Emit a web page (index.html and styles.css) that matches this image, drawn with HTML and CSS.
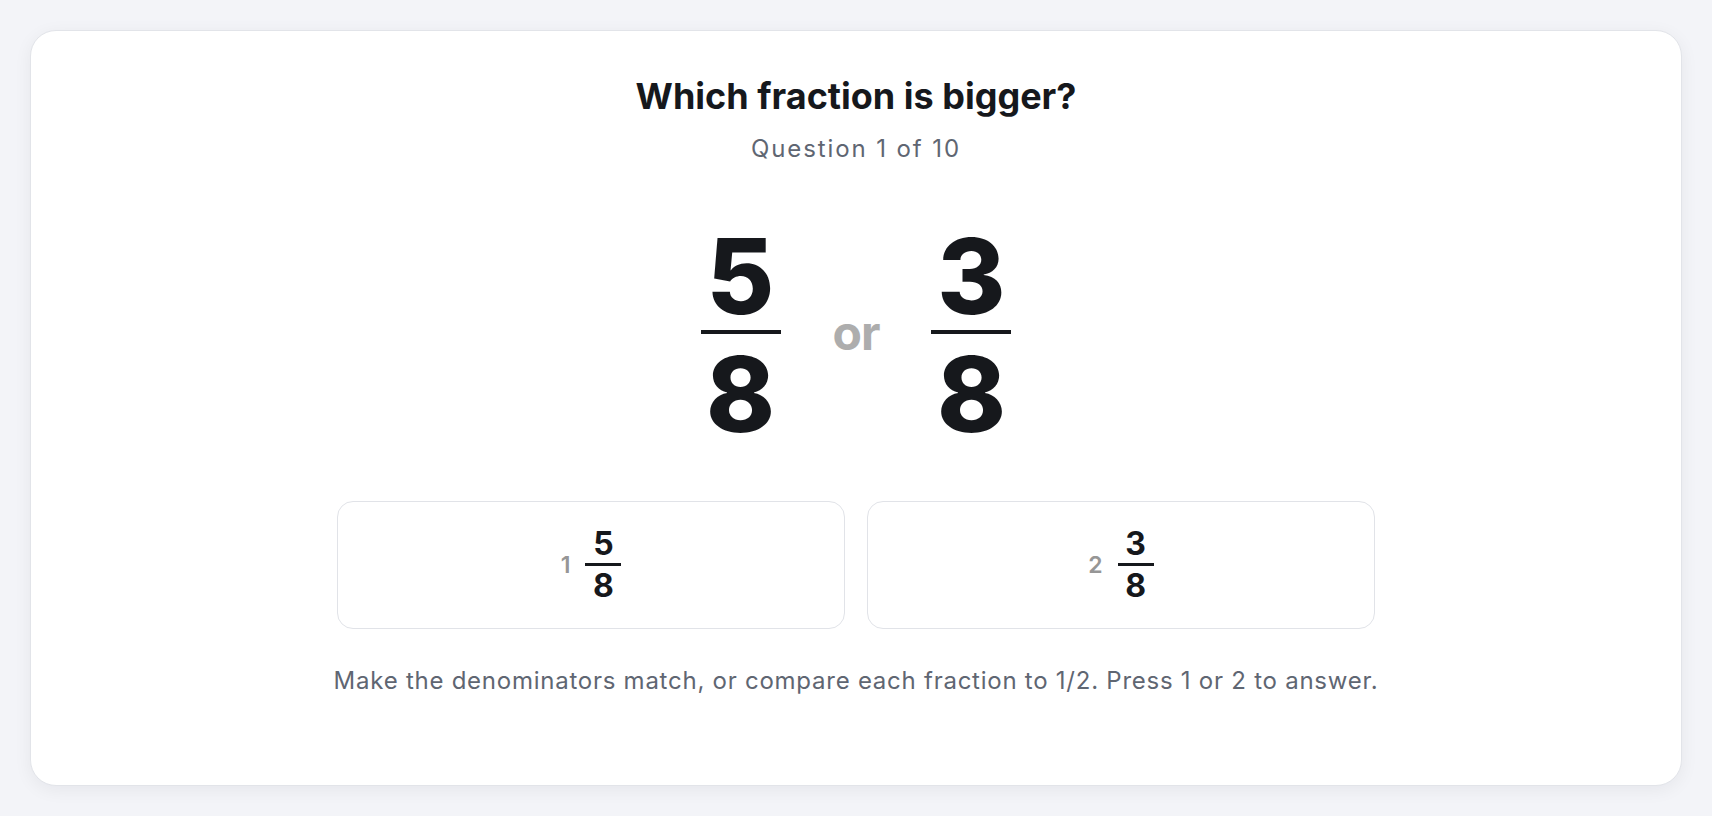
FILE: index.html
```html
<!DOCTYPE html>
<html lang="en">
<head>
  <meta charset="UTF-8" />
  <meta name="viewport" content="width=device-width, initial-scale=1.0"/>
  <title>Which fraction is bigger?</title>
  <link rel="stylesheet" href="styles.css">
</head>
<body>

<main class="card">
  <h1 class="title">Which fraction is bigger?</h1>
  <p class="progress">Question 1 of 10</p>

  <div class="compare">
    <div class="frac frac-big">
      <span class="num">5</span>
      <span class="bar"></span>
      <span class="den">8</span>
    </div>
    <span class="or">or</span>
    <div class="frac frac-big">
      <span class="num">3</span>
      <span class="bar"></span>
      <span class="den">8</span>
    </div>
  </div>

  <div class="choices">
    <button class="choice">
      <span class="key">1</span>
      <span class="frac frac-small">
        <span class="num">5</span>
        <span class="bar"></span>
        <span class="den">8</span>
      </span>
    </button>
    <button class="choice">
      <span class="key">2</span>
      <span class="frac frac-small">
        <span class="num">3</span>
        <span class="bar"></span>
        <span class="den">8</span>
      </span>
    </button>
  </div>

  <p class="hint">Make the denominators match, or compare each fraction to 1/2. Press 1 or 2 to answer.</p>
</main>

</body>
</html>
```

FILE: styles.css
```css
* {
  margin: 0;
  padding: 0;
  box-sizing: border-box;
}

html, body {
  height: 100%;
  font-family: Inter, 'Noto Sans', sans-serif;
  background: #f3f4f8;
  color: #16181c;
}

body {
  padding: 30px;
}

.card {
  height: 100%;
  background: #fff;
  border: 1px solid #e2e4e9;
  border-radius: 26px;
  box-shadow: 0 4px 18px rgba(20, 24, 40, 0.06);
  padding-top: 43px;
  display: flex;
  flex-direction: column;
  align-items: center;
}

.title {
  font-size: 36px;
  line-height: 44px;
  font-weight: 700;
}

.progress {
  margin-top: 15px;
  font-size: 24px;
  line-height: 32px;
  letter-spacing: 1.9px;
  color: #5f6672;
}

/* Fracciones */
.frac {
  display: inline-flex;
  flex-direction: column;
  align-items: stretch;
  text-align: center;
  line-height: 1;
}

.frac .bar {
  display: block;
  background: #16181c;
}

.compare {
  margin-top: 59px;
  display: flex;
  align-items: center;
  gap: 52px;
}

.frac-big {
  font-size: 104px;
  font-weight: 800;
  width: 80px;
}

.frac-big .bar {
  height: 4px;
  margin: 2px 0 8px;
}

.or {
  font-size: 48px;
  line-height: 1;
  font-weight: 700;
  color: #adadad;
  margin-bottom: 5px;
  letter-spacing: -1px;
}

.choices {
  margin-top: 55px;
  display: flex;
  gap: 22px;
}

.choice {
  width: 508px;
  height: 128px;
  background: #fff;
  border: 1px solid #e1e3e8;
  border-radius: 16px;
  display: flex;
  justify-content: center;
  align-items: center;
  gap: 15px;
  font-family: inherit;
  color: inherit;
  cursor: pointer;
}

.key {
  font-size: 23px;
  font-weight: 600;
  color: #969696;
}

.frac-small {
  font-size: 32px;
  font-weight: 700;
  width: 36px;
}

.frac-small .bar {
  height: 3px;
  margin: 3px 0 4px;
}

.hint {
  margin-top: 36px;
  font-size: 24px;
  line-height: 32px;
  letter-spacing: 0.75px;
  color: #5f6672;
}
```
